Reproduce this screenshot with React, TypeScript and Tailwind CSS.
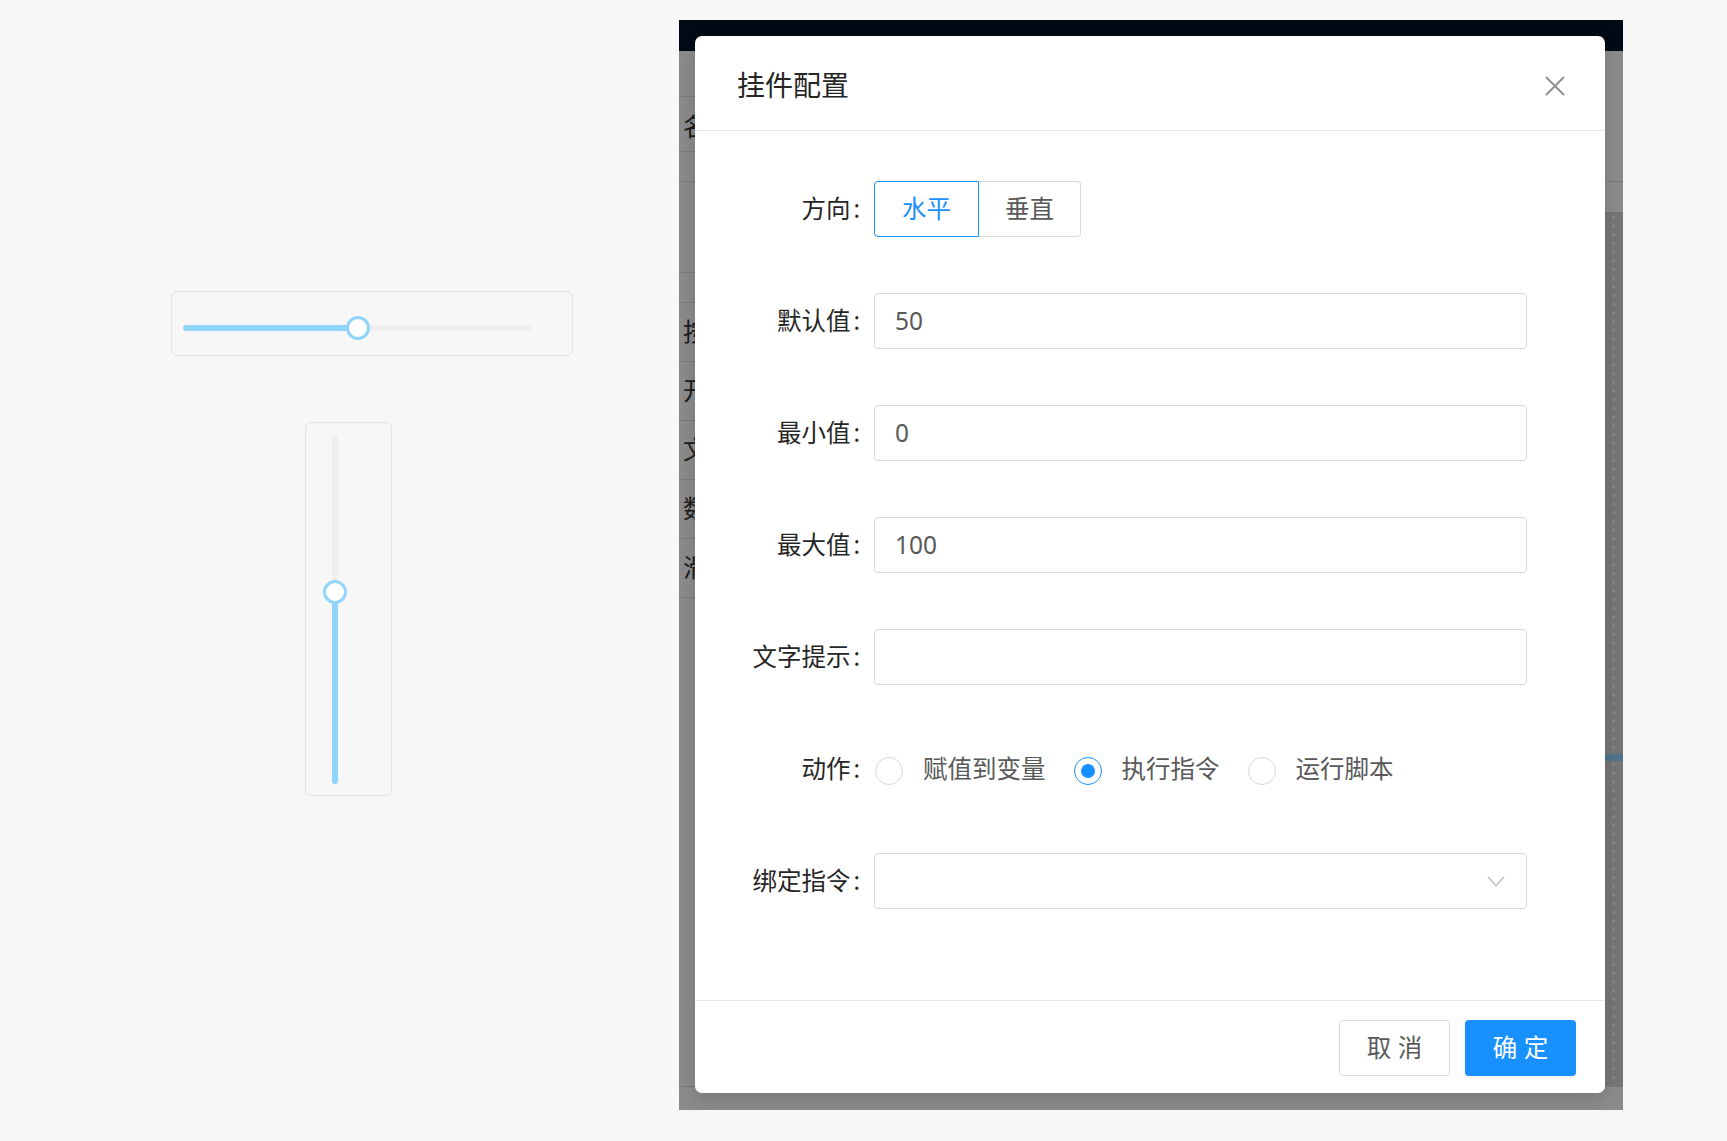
import React from "react";

const labelCls =
  "w-[137px] shrink-0 flex items-center justify-end text-[24.5px] text-[#262626]";

function FormLabel({ text }: { text: string }) {
  return (
    <div className={labelCls}>
      <span>{text}</span>
      <span className="ml-[3px] mr-[14px]">:</span>
    </div>
  );
}

function TextInput({ value }: { value?: string }) {
  return (
    <div className="w-[653px] h-[56px] border border-[#d9d9d9] rounded-[4px] bg-white flex items-center pl-[20px] text-[24.5px] text-[#595959]">
      {value}
    </div>
  );
}

function Radio({ label, checked }: { label: string; checked?: boolean }) {
  return (
    <div className="flex items-center">
      <div
        className={
          checked
            ? "w-[28px] h-[28px] mt-[3px] rounded-full border border-[#1890ff] bg-white flex items-center justify-center"
            : "w-[28px] h-[28px] mt-[3px] rounded-full border border-[#d9d9d9] bg-white"
        }
      >
        {checked && <div className="w-[14px] h-[14px] rounded-full bg-[#1890ff]" />}
      </div>
      <span className="pl-[20px] pr-[28px] text-[24.5px] text-[#595959]">{label}</span>
    </div>
  );
}

function HSlider() {
  return (
    <div className="ml-[171px] w-[402px] h-[65px] border border-[#e2e3e6] rounded-[6px] flex items-center pl-[11px] pr-[39px] pt-[8px]">
      <div className="relative w-full h-[6px] rounded-full bg-[#efefef]">
        <div className="h-full w-1/2 rounded-full bg-[#91d5ff]" />
        <div className="absolute left-1/2 top-1/2 -translate-x-1/2 -translate-y-1/2 w-[24px] h-[24px] rounded-full border-[3px] border-[#91d5ff] bg-white" />
      </div>
    </div>
  );
}

function VSlider() {
  return (
    <div className="mt-[66px] ml-[305px] w-[87px] h-[374px] border border-[#e2e3e6] rounded-[6px] flex pl-[26px] pt-[12px] pb-[11px]">
      <div className="relative w-[6px] h-full rounded-full bg-[#efefef] flex flex-col justify-end">
        <div className="w-full h-[55%] rounded-full bg-[#91d5ff]" />
        <div className="absolute left-1/2 top-[45%] -translate-x-1/2 -translate-y-1/2 w-[24px] h-[24px] rounded-full border-[3px] border-[#91d5ff] bg-white" />
      </div>
    </div>
  );
}

const widgets = ["按钮", "开关", "文本", "数值", "滑块"];

function BackgroundApp() {
  return (
    <div className="absolute inset-0 flex flex-col bg-white">
      <div className="h-[31px] bg-[#001529]" />
      <div className="flex-1 flex min-h-0">
        {/* widget panel */}
        <div className="w-[220px] flex flex-col text-[24.5px] text-[#333]">
          <div className="h-[46px] border-b border-[#dedede]" />
          <div className="h-[55px] border-b border-[#dedede] flex items-center pl-[4px] pt-[6px]">名称</div>
          <div className="h-[30px] border-b border-[#dedede]" />
          <div className="h-[91px] border-b border-[#dedede]" />
          <div className="h-[30px] border-b border-[#dedede]" />
          {widgets.map((w) => (
            <div key={w} className="h-[59px] border-b border-[#dedede] flex items-center pl-[4px]">
              {w}
            </div>
          ))}
        </div>
        {/* editor */}
        <div className="flex-1 flex flex-col">
          <div className="h-[131px] border-b border-[#dedede]" />
          <div className="h-[30px]" />
          <div className="flex-1 flex">
            <div className="flex-1 bg-white" />
            <div className="w-[18px] bg-[#d8d8d8] bg-[radial-gradient(circle,#fdfdfd_1.3px,transparent_1.8px)] bg-[length:18px_8.7px] bg-[position:-0.5px_1px] flex flex-col">
              <div className="h-[542px]" />
              <div className="h-[7px] bg-[#91d5ff]" />
            </div>
          </div>
        </div>
      </div>
      <div className="h-[24px] border-t border-[#dedede]" />
    </div>
  );
}

function ConfigModal() {
  return (
    <div className="absolute left-[16px] top-[16px] w-[910px] h-[1057px] bg-white rounded-[7px] shadow-[0_7px_21px_rgba(0,0,0,0.15)] flex flex-col">
      {/* header */}
      <div className="h-[95px] shrink-0 border-b border-[#e8e8e8] flex items-center justify-between pl-[42px] pr-[40px] pt-[3px]">
        <span className="text-[28px] text-[#262626] font-normal">挂件配置</span>
        <svg width="20" height="20" viewBox="0 0 20 20" fill="none" stroke="#8c8c8c" strokeWidth="1.8" className="mt-[2px]">
          <path d="M1 1 L19 19 M19 1 L1 19" />
        </svg>
      </div>

      {/* body */}
      <div className="flex-1 flex flex-col gap-[56px] px-[42px] pt-[50px]">
        <div className="flex h-[56px]">
          <FormLabel text="方向" />
          <div className="flex text-[24.5px]">
            <div className="w-[105px] h-[56px] border border-[#1890ff] rounded-l-[4px] bg-white text-[#1890ff] flex items-center justify-center">
              水平
            </div>
            <div className="w-[102px] h-[56px] border border-l-0 border-[#d9d9d9] rounded-r-[4px] bg-white text-[#595959] flex items-center justify-center">
              垂直
            </div>
          </div>
        </div>

        <div className="flex h-[56px]">
          <FormLabel text="默认值" />
          <TextInput value="50" />
        </div>

        <div className="flex h-[56px]">
          <FormLabel text="最小值" />
          <TextInput value="0" />
        </div>

        <div className="flex h-[56px]">
          <FormLabel text="最大值" />
          <TextInput value="100" />
        </div>

        <div className="flex h-[56px]">
          <FormLabel text="文字提示" />
          <TextInput />
        </div>

        <div className="flex h-[56px]">
          <FormLabel text="动作" />
          <div className="flex items-center pl-[1px]">
            <Radio label="赋值到变量" />
            <Radio label="执行指令" checked />
            <Radio label="运行脚本" />
          </div>
        </div>

        <div className="flex h-[56px]">
          <FormLabel text="绑定指令" />
          <div className="w-[653px] h-[56px] border border-[#d9d9d9] rounded-[4px] bg-white flex items-center justify-end pr-[21px]">
            <svg width="18" height="11" viewBox="0 0 18 11" fill="none" stroke="#bfbfbf" strokeWidth="1.5">
              <path d="M1 1 L9 9.5 L17 1" />
            </svg>
          </div>
        </div>
      </div>

      {/* footer */}
      <div className="h-[93px] shrink-0 border-t border-[#e8e8e8] flex items-center justify-end gap-[15px] pr-[29px] pt-[2px]">
        <button className="w-[111px] h-[56px] border border-[#d9d9d9] rounded-[4px] bg-white text-[24.5px] text-[#595959]">
          取 消
        </button>
        <button className="w-[111px] h-[56px] rounded-[4px] bg-[#1890ff] text-[24.5px] text-white shadow-[0_2px_0_rgba(0,0,0,0.045)]">
          确 定
        </button>
      </div>
    </div>
  );
}

export default function App() {
  return (
    <div className="min-h-screen bg-[#f7f7f7] flex items-start pt-[20px] font-['Noto_Sans','Noto_Sans_CJK_SC',sans-serif]">
      {/* Widget previews */}
      <div className="w-[679px] shrink-0 flex flex-col pt-[271px]">
        <HSlider />
        <VSlider />
      </div>

      {/* Editor with config dialog */}
      <div className="relative w-[944px] h-[1090px] shrink-0 overflow-hidden">
        <BackgroundApp />
        <div className="absolute inset-0 bg-black/45" />
        <ConfigModal />
      </div>
    </div>
  );
}
